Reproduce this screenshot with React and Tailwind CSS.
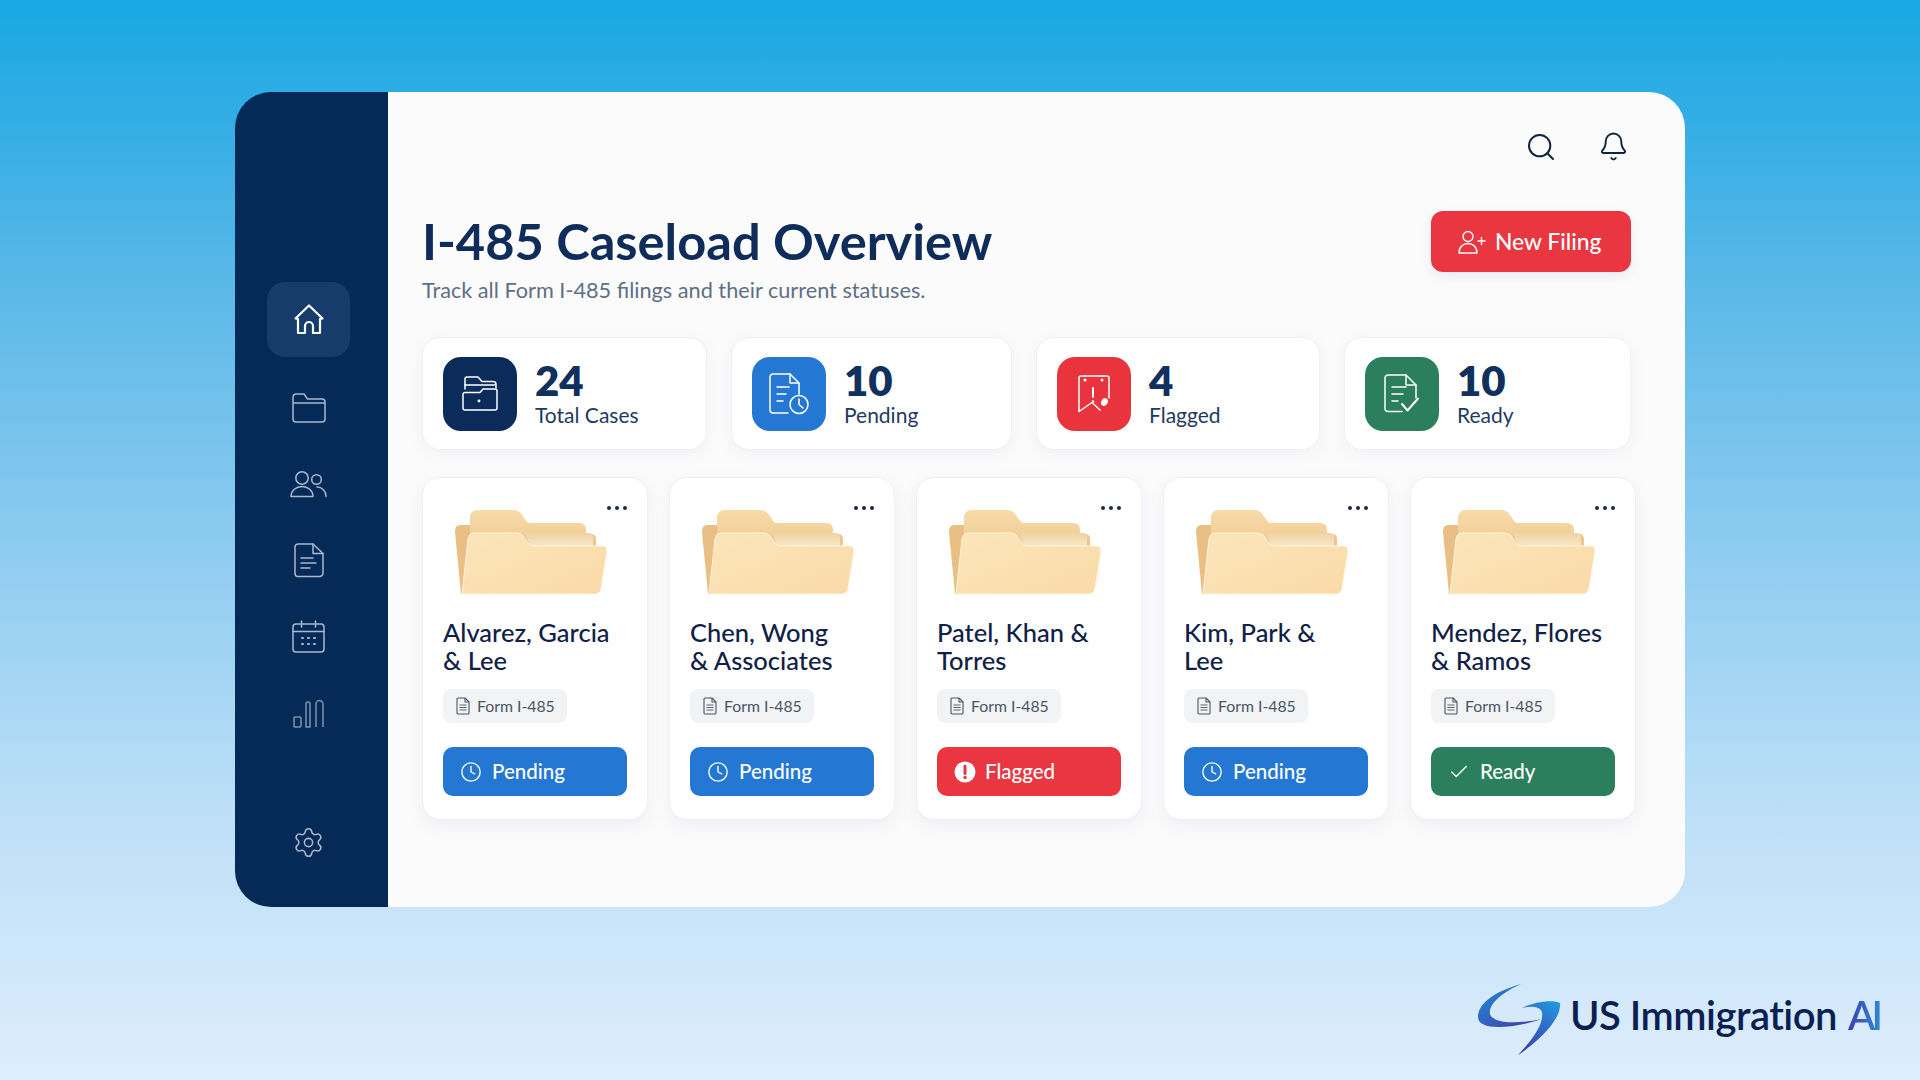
import React from "react";
import { Search, Bell, Settings, Clock, Check } from "lucide-react";

const FONT = "font-['Lato','Liberation_Sans',sans-serif]";

function HomeIcon() {
  return (
    <svg width="32" height="33" viewBox="0 0 32 33" fill="none" stroke="#fff" strokeWidth="2.2" strokeLinecap="round" strokeLinejoin="round">
      <path d="M2.5 15.5 L16 2.5 L29.5 15.5 L27 16 V30 H20 V23 a4 4 0 0 0 -8 0 V30 H5 V16 Z" />
    </svg>
  );
}
function FolderIcon() {
  return (
    <svg width="34" height="30" viewBox="0 0 34 30" fill="none" stroke="#aab8cc" strokeWidth="1.5" strokeLinejoin="round">
      <path d="M1 26 V4 a3 3 0 0 1 3-3 h8 l3.5 5 H30 a3 3 0 0 1 3 3 v17 a3 3 0 0 1-3 3 H4 a3 3 0 0 1-3-3z" />
      <path d="M1 10 H33" />
    </svg>
  );
}
function UsersIcon() {
  return (
    <svg width="37" height="28" viewBox="0 0 37 28" fill="none" stroke="#aab8cc" strokeWidth="1.5" strokeLinecap="round" strokeLinejoin="round">
      <circle cx="12" cy="8" r="6.2" />
      <circle cx="26.5" cy="9.5" r="4.8" />
      <path d="M1 26.5 c0-6 5-10 11-10 s11 4 11 10 Z" />
      <path d="M27 17 c5 0 9 4 9 9.5" />
    </svg>
  );
}
function DocIcon() {
  return (
    <svg width="30" height="35" viewBox="0 0 30 35" fill="none" stroke="#aab8cc" strokeWidth="1.5" strokeLinecap="round" strokeLinejoin="round">
      <path d="M4 1 H19 L29 10.5 V30 a3.5 3.5 0 0 1-3.5 3.5 H4 a3 3 0 0 1-3-3 V4 a3 3 0 0 1 3-3z" />
      <path d="M19 1 V10.5 H29" />
      <path d="M7 15 H19 M7 20 H22 M7 25 H16" />
    </svg>
  );
}
function CalendarIcon() {
  return (
    <svg width="33" height="33" viewBox="0 0 33 33" fill="none" stroke="#aab8cc" strokeWidth="1.5" strokeLinecap="round">
      <rect x="1" y="4" width="31" height="28" rx="3" />
      <path d="M1 11.5 H32 M9.5 1 V7 M23.5 1 V7" />
      <path d="M10 18 h1 M16 18 h1 M22 18 h1 M10 24 h1 M16 24 h1 M22 24 h1" strokeWidth="2" />
    </svg>
  );
}
function ChartIcon() {
  return (
    <svg width="31" height="32" viewBox="0 0 31 32" fill="none" stroke="#7d92ae" strokeWidth="1.5" strokeLinejoin="round">
      <rect x="1" y="21" width="7" height="10" rx="1" />
      <path d="M13 31 V8 a2 2 0 0 1 4 0 V31 Z" />
      <path d="M23 31 V8 a3.5 3.5 0 0 1 7 0 V31" />
    </svg>
  );
}

function FolderArt({ id }) {
  return (
    <svg width="152" height="86" viewBox="0 0 152 86" className="block">
      <defs>
        <linearGradient id={id + "a"} x1="0" y1="0" x2="0" y2="1">
          <stop offset="0" stopColor="#f7dba9" />
          <stop offset="1" stopColor="#f1cd95" />
        </linearGradient>
        <linearGradient id={id + "b"} x1="0" y1="0" x2="1" y2="1">
          <stop offset="0" stopColor="#fce5bb" />
          <stop offset="1" stopColor="#fadaa7" />
        </linearGradient>
        <linearGradient id={id + "c"} x1="0" y1="0" x2="0" y2="1">
          <stop offset="0" stopColor="#efd3a3" />
          <stop offset="1" stopColor="#f9eacb" />
        </linearGradient>
      </defs>
      <path d="M5 15 H18 V84 H6 L0 22 Q0 15 5 15Z" fill="#e9bf85" />
      <path d="M15 8 Q15 0 23 0 H58 Q64 0 67 5 L72 12 Q73 13 76 13 H124 Q131 13 131 20 V30 H15Z" fill={`url(#${id}a)`} />
      <path d="M70 24 H136 Q141 24 141 29 V38 H70Z" fill="#ecc792" />
      <path d="M70 23 H134 Q138 23 138 27 V38 H76Z" fill={`url(#${id}c)`} />
      <path d="M19 23 H62 Q66 23 68 26 L73 33 Q75 36 78 36 H147 Q152 36 152 41 L146 78 Q145 84 139 84 H7 L13 29 Q14 23 19 23Z" fill={`url(#${id}b)`} stroke="#fff4dc" strokeWidth="1" />
    </svg>
  );
}

function StatGlyph({ kind }) {
  const common = { fill: "none", stroke: "#fff", strokeWidth: 1.5, strokeLinecap: "round", strokeLinejoin: "round" };
  if (kind === "folder")
    return (
      <svg width="36" height="35" viewBox="0 0 36 35" {...common}>
        <path d="M3 13 V3 a2 2 0 0 1 2-2 h11 l4 4.5 h11 a3 3 0 0 1 3 3 V12" />
        <path d="M3 9 H33" />
        <path d="M1 18 V32 a2 2 0 0 0 2 2 h30 a2 2 0 0 0 2-2 V15 a2 2 0 0 0-2-2 H21 l-3 3.5 H3 a2 2 0 0 0-2 1.5z" />
        <circle cx="17" cy="25" r="1.4" fill="#fff" stroke="none" />
      </svg>
    );
  if (kind === "pending")
    return (
      <svg width="40" height="42" viewBox="0 0 40 42" {...common}>
        <path d="M19 40 H4 a3 3 0 0 1-3-3 V4 a3 3 0 0 1 3-3 H21 L30 10 V21" />
        <path d="M21 1 V10 H30" />
        <path d="M8 14 H20 M8 21 H17 M8 28 H14" />
        <circle cx="30" cy="31.5" r="9" />
        <path d="M30 26 V31.5 L34 35" />
      </svg>
    );
  if (kind === "flag")
    return (
      <svg width="34" height="38" viewBox="0 0 34 38" {...common}>
        <path d="M2 36.5 V3 a2 2 0 0 1 2-2 H30 a2 2 0 0 1 2 2 V23" />
        <path d="M2 36.5 L15 27.5 L23 35" />
        <path d="M16 13 V22" strokeWidth="2" />
        <circle cx="16" cy="26.5" r="1.2" fill="#fff" stroke="none" />
        <circle cx="8" cy="5" r="1.5" fill="#fff" stroke="none" />
        <circle cx="25" cy="5" r="1.5" fill="#fff" stroke="none" />
        <ellipse cx="27.5" cy="27" rx="3.2" ry="4" transform="rotate(30 27.5 27)" fill="#fff" stroke="none" />
      </svg>
    );
  return (
    <svg width="37" height="39" viewBox="0 0 37 39" {...common}>
      <path d="M18 37.5 H4 a3 3 0 0 1-3-3 V4 a3 3 0 0 1 3-3 H22 L32 11 V24" />
      <path d="M22 1 V11 H32" />
      <path d="M8 13 H22 M8 20 H19 M8 27 H14" />
      <path d="M18 30 L23.5 36.5 L34 24.5" strokeWidth="2" />
    </svg>
  );
}

function StatCard({ value, label, kind, color }) {
  return (
    <div className="flex items-center gap-[18px] h-[113px] pl-[20px] bg-white rounded-[18px] border border-[#eef0f4] shadow-[0_4px_16px_rgba(30,50,90,0.05)]">
      <div className={`flex items-center justify-center w-[74px] h-[74px] rounded-[18px] ${color}`}>
        <StatGlyph kind={kind} />
      </div>
      <div className="flex flex-col -mt-[3px]">
        <span className="text-[42px] leading-[45px] font-extrabold text-[#10305e]">{value}</span>
        <span className="text-[21px] leading-[24px] text-[#1f3a60]">{label}</span>
      </div>
    </div>
  );
}

function PillDoc() {
  return (
    <svg width="14" height="18" viewBox="0 0 14 18" fill="none" stroke="#4b5563" strokeWidth="1.1" strokeLinejoin="round">
      <path d="M2 1 H9 L13 5 V16 a1 1 0 0 1-1 1 H2 a1 1 0 0 1-1-1 V2 a1 1 0 0 1 1-1z" />
      <path d="M9 1 V5 H13" />
      <path d="M3.5 8 H10.5 M3.5 10.5 H10.5 M3.5 13 H10.5" strokeWidth="0.9" />
    </svg>
  );
}

function Status({ type }) {
  const base = "flex items-center h-[49px] pl-[17px] rounded-[10px] text-white text-[20.5px] font-medium";
  if (type === "Flagged")
    return (
      <div className={`${base} gap-[9px] bg-[#ea3640]`}>
        <svg width="22" height="22" viewBox="0 0 22 22">
          <circle cx="11" cy="11" r="10.5" fill="#fff" />
          <path d="M11 5 V12.5" stroke="#ea3640" strokeWidth="3" strokeLinecap="round" />
          <circle cx="11" cy="16.5" r="1.7" fill="#ea3640" />
        </svg>
        Flagged
      </div>
    );
  if (type === "Ready")
    return (
      <div className={`${base} gap-[10px] bg-[#2b7f5c]`}>
        <Check size={22} strokeWidth={1.5} />
        Ready
      </div>
    );
  return (
    <div className={`${base} gap-[10px] bg-[#2478d4]`}>
      <Clock size={22} strokeWidth={1.5} />
      Pending
    </div>
  );
}

function CaseCard({ id, line1, line2, status }) {
  return (
    <div className="flex flex-col pt-[28px] px-[20px] pb-[23px] bg-white rounded-[18px] border border-[#eef0f4] shadow-[0_6px_18px_rgba(30,50,90,0.06)]">
      <div className="flex justify-between">
        <div className="ml-[12px] mt-[4px]">
          <FolderArt id={id} />
        </div>
        <div className="flex gap-[4px] h-[4px] mr-[1px]">
          <span className="w-[4px] h-[4px] rounded-full bg-[#1b2a44]" />
          <span className="w-[4px] h-[4px] rounded-full bg-[#1b2a44]" />
          <span className="w-[4px] h-[4px] rounded-full bg-[#1b2a44]" />
        </div>
      </div>
      <div className="mt-[22px] text-[25.5px] leading-[28px] font-medium text-[#0f2146]">
        <div>{line1}</div>
        <div>{line2}</div>
      </div>
      <div className="mt-[15px] self-start flex items-center gap-[7px] h-[34px] pl-[13px] pr-[12px] rounded-[8px] bg-[#f1f3f5] text-[15.8px] text-[#4b5563]">
        <PillDoc />
        Form I-485
      </div>
      <div className="mt-[24px]">
        <Status type={status} />
      </div>
    </div>
  );
}

function Logo() {
  return (
    <div className="flex items-center justify-end pr-[37px] mt-[77px]">
      <svg width="83" height="71" viewBox="0 0 83 71">
        <defs>
          <linearGradient id="lg1" x1="0" y1="0" x2="1" y2="1">
            <stop offset="0" stopColor="#1c8ed6" />
            <stop offset="1" stopColor="#4a35a8" />
          </linearGradient>
          <linearGradient id="lg2" x1="0.8" y1="0" x2="0.3" y2="1">
            <stop offset="0" stopColor="#2494dc" />
            <stop offset="1" stopColor="#3f3cb0" />
          </linearGradient>
        </defs>
        <path d="M43 0 C15 8 0 20 0 33 C0 46 30 46 64 35 C40 40 15 40 12 30 C10 20 25 8 43 0Z" fill="url(#lg1)" />
        <path d="M44 24 C55 18 75 15 82 19 C84 35 60 58 40 71 C55 55 66 40 64 28 C62 22 52 22 44 24Z" fill="url(#lg2)" />
      </svg>
      <span className="ml-[9px] pb-[10px] text-[40px] leading-none font-semibold tracking-[-0.5px] text-[#0b1f52]">US Immigration</span>
      <span className="ml-[11px] pb-[10px] pr-[4px] text-[40px] leading-none font-semibold tracking-[-4px] bg-linear-to-r from-[#3a3db0] to-[#2a8fd8] bg-clip-text text-transparent">AI</span>
    </div>
  );
}

const cases = [
  ["a", "Alvarez, Garcia", "& Lee", "Pending"],
  ["b", "Chen, Wong", "& Associates", "Pending"],
  ["c", "Patel, Khan &", "Torres", "Flagged"],
  ["d", "Kim, Park &", "Lee", "Pending"],
  ["e", "Mendez, Flores", "& Ramos", "Ready"],
];

export default function App() {
  return (
    <div className={`${FONT} w-[1920px] h-[1080px] overflow-hidden flex flex-col bg-[linear-gradient(180deg,#18a8e2_0%,#35aee5_12%,#57b7e7_25%,#8ccbf0_50%,#bcdff7_75%,#deedfc_100%)]`}>
      <div className="flex w-[1450px] h-[815px] shrink-0 mt-[92px] ml-[235px] rounded-[36px] overflow-hidden">
        <aside className="flex flex-col items-center w-[153px] shrink-0 pt-[190px] pb-[42px] pr-[6px] bg-[#062a58]">
          <div className="flex items-center justify-center w-[83px] h-[75px] rounded-[18px] bg-[#163c6b]">
            <HomeIcon />
          </div>
          <div className="flex flex-col items-center gap-[30px] mt-[28px] flex-1">
            <div className="flex items-center justify-center h-[46px]"><FolderIcon /></div>
            <div className="flex items-center justify-center h-[46px]"><UsersIcon /></div>
            <div className="flex items-center justify-center h-[46px]"><DocIcon /></div>
            <div className="flex items-center justify-center h-[46px]"><CalendarIcon /></div>
            <div className="flex items-center justify-center h-[46px]"><ChartIcon /></div>
            <div className="flex items-center justify-center h-[46px] mt-auto">
              <Settings size={33} strokeWidth={1.1} color="#aab8cc" />
            </div>
          </div>
        </aside>
        <main className="flex-1 flex flex-col pl-[34px] pr-[49px] pt-[40px] bg-[#fbfbfc]">
          <div className="flex justify-end items-center gap-[41px] pr-[7px] h-[29px] text-[#10233f]">
            <Search size={32} strokeWidth={1.5} />
            <Bell size={31} strokeWidth={1.5} />
          </div>
          <div className="flex justify-between mt-[50px] pr-[5px]">
            <div>
              <h1 className="text-[50.6px] leading-[60px] font-bold text-[#0f2d5a]">I-485 Caseload Overview</h1>
              <p className="text-[21.7px] leading-[26px] mt-[6px] text-[#5f6f84]">Track all Form I-485 filings and their current statuses.</p>
            </div>
            <button className="flex items-center gap-[9px] w-[200px] h-[61px] pl-[27px] rounded-[12px] bg-[#ea3640] text-white text-[22.8px] font-medium shadow-[0_4px_12px_rgba(30,50,90,0.08)]">
              <svg width="28" height="24" viewBox="0 0 28 24" fill="none" stroke="#fff" strokeWidth="1.4" strokeLinecap="round" strokeLinejoin="round">
                <circle cx="10" cy="6.5" r="5" />
                <path d="M1 23 c0-6 4-9.5 9-9.5 s9 3.5 9 9.5 Z" />
                <path d="M20 11 H27 M23.5 7.5 V14.5" />
              </svg>
              New Filing
            </button>
          </div>
          <div className="grid grid-cols-[285px_281px_284px_287px] gap-[24px] mt-[34px]">
            <StatCard value="24" label="Total Cases" kind="folder" color="bg-[#0b2c5b]" />
            <StatCard value="10" label="Pending" kind="pending" color="bg-[#2478d4]" />
            <StatCard value="4" label="Flagged" kind="flag" color="bg-[#e9343e]" />
            <StatCard value="10" label="Ready" kind="ready" color="bg-[#2b7f5c]" />
          </div>
          <div className="grid grid-cols-5 gap-[21px] mt-[27px]">
            {cases.map(([id, a, b, s]) => (
              <CaseCard key={id} id={id} line1={a} line2={b} status={s} />
            ))}
          </div>
        </main>
      </div>
      <Logo />
    </div>
  );
}
